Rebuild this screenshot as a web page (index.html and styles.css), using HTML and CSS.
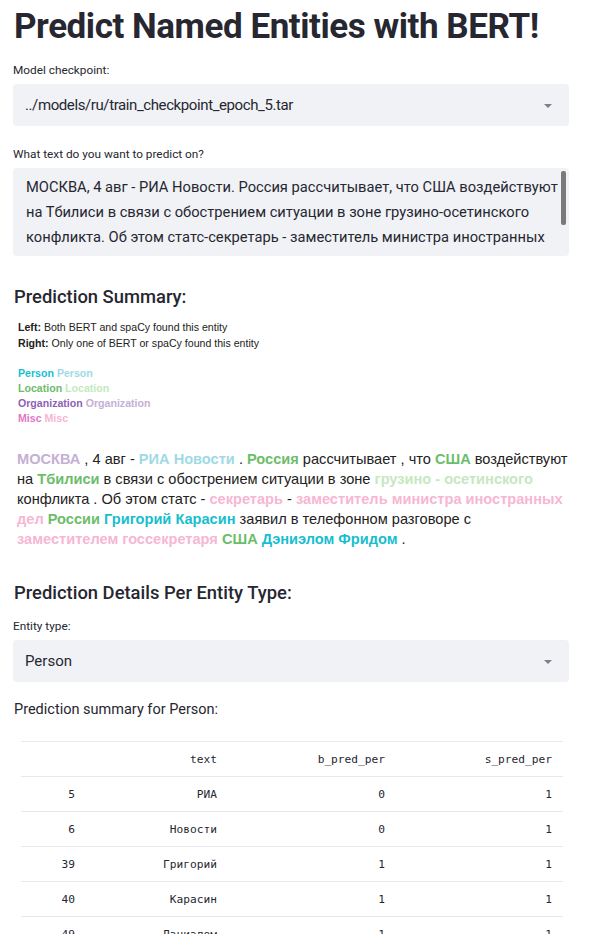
FILE: index.html
```html
<!DOCTYPE html>
<html>
<head>
<meta charset="utf-8">
<link rel="stylesheet" href="styles.css">
</head>
<body>
<main class="page">
  <h1 class="title">Predict Named Entities with BERT!</h1>

  <div class="label label-first">Model checkpoint:</div>
  <div class="select">
    <span class="select-value select-path">../models/ru/train_checkpoint_epoch_5.tar</span>
    <span class="caret"></span>
  </div>

  <div class="label label-text">What text do you want to predict on?</div>
  <div class="textarea">
    <div class="textarea-content">МОСКВА, 4 авг - РИА Новости. Россия рассчитывает, что США воздействуют на Тбилиси в связи с обострением ситуации в зоне грузино-осетинского конфликта. Об этом статс-секретарь - заместитель министра иностранных дел России Григорий Карасин заявил в телефонном разговоре с</div>
    <div class="scrollbar"></div>
  </div>

  <h3 class="subhead subhead-summary">Prediction Summary:</h3>

  <div class="legend">
    <div><b>Left:</b> Both BERT and spaCy found this entity</div>
    <div><b>Right:</b> Only one of BERT or spaCy found this entity</div>
    <div class="legend-types">
      <div><span class="per">Person</span> <span class="per-l">Person</span></div>
      <div><span class="loc">Location</span> <span class="loc-l">Location</span></div>
      <div><span class="org">Organization</span> <span class="org-l">Organization</span></div>
      <div><span class="misc">Misc</span> <span class="misc-l">Misc</span></div>
    </div>
  </div>

  <p class="annotated"><span class="org-l">МОСКВА</span> , 4 авг - <span class="per-l">РИА Новости</span> . <span class="loc">Россия</span> рассчитывает , что <span class="loc">США</span> воздействуют на <span class="loc">Тбилиси</span> в связи с обострением ситуации в зоне <span class="loc-l">грузино - осетинского</span> конфликта . Об этом статс - <span class="misc-l">секретарь</span> - <span class="misc-l">заместитель министра иностранных дел</span> <span class="loc">России</span> <span class="per">Григорий Карасин</span> заявил в телефонном разговоре с <span class="misc-l">заместителем госсекретаря</span> <span class="loc">США</span> <span class="per">Дэниэлом Фридом</span> .</p>

  <h3 class="subhead subhead-details">Prediction Details Per Entity Type:</h3>

  <div class="label label-entity">Entity type:</div>
  <div class="select">
    <span class="select-value">Person</span>
    <span class="caret"></span>
  </div>

  <p class="summary-for">Prediction summary for Person:</p>

  <table class="df">
    <thead>
      <tr><th></th><th>text</th><th>b_pred_per</th><th>s_pred_per</th></tr>
    </thead>
    <tbody>
      <tr><td>5</td><td>РИА</td><td>0</td><td>1</td></tr>
      <tr><td>6</td><td>Новости</td><td>0</td><td>1</td></tr>
      <tr><td>39</td><td>Григорий</td><td>1</td><td>1</td></tr>
      <tr><td>40</td><td>Карасин</td><td>1</td><td>1</td></tr>
      <tr><td>49</td><td>Дэниэлом</td><td>1</td><td>1</td></tr>
    </tbody>
  </table>
</main>
</body>
</html>
```

FILE: styles.css
```css
html, body {
  margin: 0;
  padding: 0;
  background: #ffffff;
}

body {
  font-family: "Roboto", "Noto Sans", sans-serif;
  color: #262730;
  overflow: hidden;
}

.page {
  width: 556px;
  padding: 0 21px 0 13px;
}

.title {
  margin: 0;
  padding-top: 5px;
  font-size: 35px;
  line-height: 44px;
  font-weight: 700;
  letter-spacing: -0.45px;
  color: #262730;
  padding-left: 1px;
  white-space: nowrap;
}

.label {
  font-size: 11.8px;
  line-height: 16px;
  color: #262730;
}

.label-first { margin-top: 13px; }
.label-text { margin-top: 20px; }
.label-entity { margin-top: 13px; }

.select {
  margin-top: 6px;
  height: 42px;
  background: #f0f2f6;
  border-radius: 4px;
  display: flex;
  align-items: center;
  justify-content: space-between;
  padding: 0 17px 0 12px;
}

.select-value {
  font-size: 15px;
  color: #262730;
}

.select-path {
  letter-spacing: -0.4px;
}

.caret {
  width: 0;
  height: 0;
  border-left: 4px solid transparent;
  border-right: 4px solid transparent;
  border-top: 4px solid #7d7f8c;
  margin-top: 2px;
}

.textarea {
  margin-top: 6px;
  height: 88px;
  background: #f0f2f6;
  border-radius: 4px;
  position: relative;
  overflow: hidden;
}

.textarea-content {
  padding: 7px 8px 0 13px;
  font-size: 14.7px;
  line-height: 25px;
  color: #262730;
}

.scrollbar {
  position: absolute;
  right: 3px;
  top: 3px;
  width: 5px;
  height: 54px;
  background: #7a7a7a;
  border-radius: 2px;
}

.subhead {
  margin: 0;
  font-weight: 500;
  font-size: 18.4px;
  line-height: 24px;
  color: #262730;
  padding-left: 1px;
}

.subhead-summary { margin-top: 29px; }
.subhead-details { margin-top: 32px; }

.legend {
  margin-top: 10px;
  padding-left: 5px;
  font-family: "Liberation Sans", Arial, sans-serif;
  font-size: 10.6px;
  line-height: 16px;
  color: #222;
}

.legend b { font-weight: 700; }

.legend-types {
  margin-top: 15px;
  font-weight: 700;
  line-height: 15px;
}

.per { color: #17becf; font-weight: 700; }
.per-l { color: #9edae5; font-weight: 700; }
.loc { color: #6cbd6a; font-weight: 700; }
.loc-l { color: #c5e8bf; font-weight: 700; }
.org { color: #8d5fb6; font-weight: 700; }
.org-l { color: #c5b0d5; font-weight: 700; }
.misc { color: #e377c2; font-weight: 700; }
.misc-l { color: #f7b6d2; font-weight: 700; }

.annotated {
  margin: 23px 0 0 0;
  padding-left: 4px;
  font-family: "Liberation Sans", Arial, sans-serif;
  font-size: 14.6px;
  line-height: 20.1px;
  color: #222;
}

.summary-for {
  margin: 18px 0 0 0;
  padding-left: 1px;
  font-size: 14.5px;
  line-height: 20px;
  color: #262730;
}

.df {
  margin: 21px 0 0 8px;
  width: 542px;
  table-layout: fixed;
  border-collapse: collapse;
  font-family: "DejaVu Sans Mono", "Liberation Mono", monospace;
  font-size: 11.2px;
  color: #262730;
}

.df th, .df td {
  height: 34px;
  border-top: 1px solid #e6e9ef;
  text-align: right;
  font-weight: 400;
  padding: 0 11px 0 0;
}

.df th:nth-child(1), .df td:nth-child(1) { width: 54px; }
.df th:nth-child(2), .df td:nth-child(2) { width: 131px; }
.df th:nth-child(3), .df td:nth-child(3) { width: 157px; }
```
